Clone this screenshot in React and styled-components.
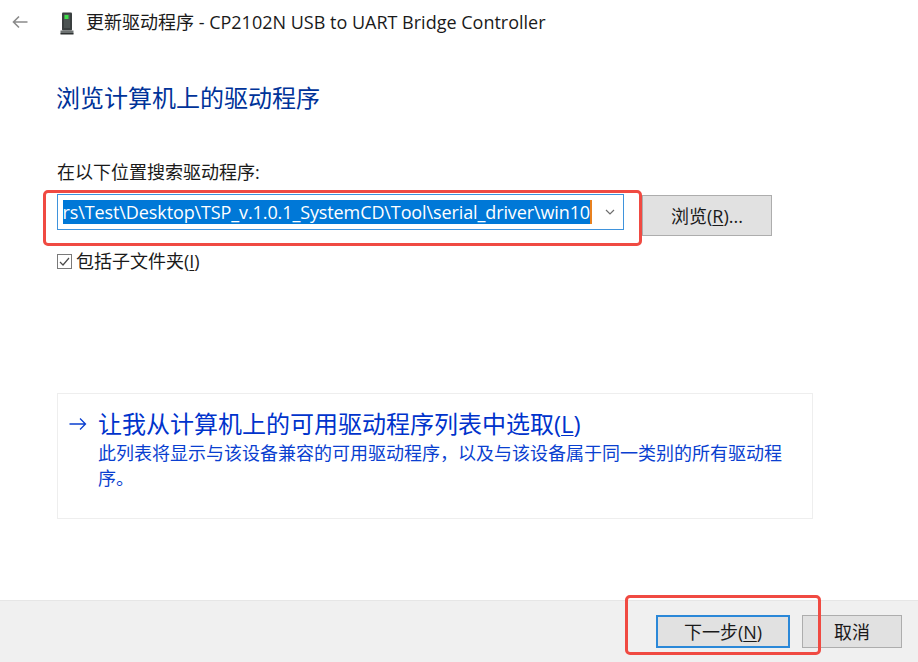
import React from "react";
import styled, { createGlobalStyle } from "styled-components";

const Global = createGlobalStyle`
  html, body { margin: 0; padding: 0; background: #fff; }
  body { font-family: "Open Sans", "Noto Sans CJK SC", sans-serif; }
  * { box-sizing: border-box; }
`;
const Page = styled.div`
  position: relative; width: 918px; height: 662px; display: flex; flex-direction: column;
  overflow: hidden; background: #fff; color: #1a1a1a;
`;
const Header = styled.header`
  height: 46px; display: flex; align-items: center; padding-left: 12px; flex: none;
`;
const Back = styled.svg`width: 16px; height: 14px; flex: none; margin-right: 32px; margin-top: -3px;`;
const Device = styled.svg`width: 14px; height: 23px; flex: none; margin-right: 12px;`;
const Title = styled.div`font-size: 18px; line-height: 24px; white-space: nowrap; margin-top: -2px;`;
const Main = styled.main`flex: 1; padding: 0 105px 0 57px; display: flex; flex-direction: column;`;
const Heading = styled.h1`
  margin: 34px 0 0 -1px; font-size: 24px; font-weight: 400; line-height: 36px; color: #003399; white-space: nowrap;
`;
const Label = styled.div`margin-top: 44px; font-size: 18px; line-height: 24px; white-space: nowrap;`;
const Row = styled.div`margin-top: 10px; display: flex; align-items: flex-start; gap: 18px;`;
const Combo = styled.div`
  width: 567px; height: 36px; border: 1px solid #3f93dc; display: flex; align-items: center; padding-left: 5px; background: #fff;
`;
const Field = styled.div`width: 529px; height: 24px; display: flex; justify-content: flex-end; margin-top: -1px;`;
const Selected = styled.span`
  flex: none; height: 24px; line-height: 24px; font-size: 18px; background: #0078d7; color: #fff; white-space: nowrap;
  border-right: 2px solid #e8811f; letter-spacing: -0.11px;
`;
const Chevron = styled.svg`width: 10px; height: 6px; margin-left: 13px; flex: none;`;
const Button = styled.button`
  width: ${p => p.$w}px; height: ${p => p.$h}px; background: #e1e1e1; font: inherit; font-size: 18px; color: #1a1a1a;
  border: 1px solid ${p => (p.$primary ? "#2b88d8" : "#adadad")}; border-width: ${p => (p.$primary ? 2 : 1)}px;
  padding: 0; display: flex; align-items: center; justify-content: center; white-space: nowrap; line-height: 24px;
  margin-top: ${p => p.$top || 0}px;
`;
const Key = styled.span`text-decoration: underline; text-underline-offset: 2px; text-decoration-thickness: 1px;`;
const CheckRow = styled.label`margin-top: 13px; display: flex; align-items: center; gap: 4px; font-size: 18px; line-height: 24px;`;
const Check = styled.svg`width: 15px; height: 15px; flex: none;`;
const LinkBox = styled.div`
  margin-top: 120px; width: 756px; height: 126px; border: 1px solid #eeeeee; display: flex; gap: 11px; padding: 15px 11px 0;
  color: #0033cc;
`;
const Arrow = styled.svg`width: 18px; height: 14px; flex: none; margin-top: 8px;`;
const LinkText = styled.div`display: flex; flex-direction: column; width: 690px;`;
const LinkTitle = styled.div`font-size: 24px; line-height: 30px; white-space: nowrap;`;
const LinkDesc = styled.div`font-size: 18px; line-height: 25px; margin-top: 2px; color: #0a3fd0;`;
const Footer = styled.footer`
  height: 62px; flex: none; background: #f0f0f0; border-top: 1px solid #e6e6e6; display: flex; align-items: flex-start;
  justify-content: flex-end; gap: 12px; padding: 14px 16px 0 0;
`;
const Callout = styled.div`
  position: absolute; left: ${p => p.$x}px; top: ${p => p.$y}px; width: ${p => p.$w}px; height: ${p => p.$h}px;
  border: 3px solid #f04a42; border-radius: 5px; pointer-events: none;
`;

export default function App() {
  return (
    <Page>
      <Global />
      <Header>
        <Back viewBox="0 0 16 14" fill="none" stroke="#8a8a8a" strokeWidth="1.6">
          <path d="M15.5 7H1.5M7 1.5 1.5 7 7 12.5" />
        </Back>
        <Device viewBox="0 0 14 23">
          <rect x="2" y="0.5" width="10" height="18" rx="1" fill="#3a3f3f" />
          <rect x="4" y="2" width="6" height="14" fill="#4c5352" />
          <rect x="4.5" y="3" width="4" height="4" fill="#3fe04a" />
          <rect x="0.5" y="18.5" width="13" height="3" fill="#6d7272" />
          <rect x="0.5" y="21" width="13" height="1.5" fill="#2e3232" />
        </Device>
        <Title>更新驱动程序 - CP2102N USB to UART Bridge Controller</Title>
      </Header>
      <Main>
        <Heading>浏览计算机上的驱动程序</Heading>
        <Label>在以下位置搜索驱动程序:</Label>
        <Row>
          <Combo>
            <Field>
              <Selected>rs\Test\Desktop\TSP_v.1.0.1_SystemCD\Tool\serial_driver\win10</Selected>
            </Field>
            <Chevron viewBox="0 0 10 6" fill="none" stroke="#6e6e6e" strokeWidth="1.2">
              <path d="M1 1l4 4 4-4" />
            </Chevron>
          </Combo>
          <Button $w={130} $h={41} $top={1}>浏览(<Key>R</Key>)...</Button>
        </Row>
        <CheckRow>
          <Check viewBox="0 0 15 15" fill="none">
            <rect x="0.5" y="0.5" width="14" height="14" stroke="#7a7a7a" />
            <path d="M3 8l3 3 6-7" stroke="#4a4a4a" strokeWidth="1.2" />
          </Check>
          <span>包括子文件夹(<Key>I</Key>)</span>
        </CheckRow>
        <LinkBox>
          <Arrow viewBox="0 0 18 14" fill="none" stroke="#0a3fd0" strokeWidth="1.3">
            <path d="M0.5 7h16M11 1.5 16.5 7 11 12.5" />
          </Arrow>
          <LinkText>
            <LinkTitle>让我从计算机上的可用驱动程序列表中选取(<Key>L</Key>)</LinkTitle>
            <LinkDesc>此列表将显示与该设备兼容的可用驱动程序，以及与该设备属于同一类别的所有驱动程序。</LinkDesc>
          </LinkText>
        </LinkBox>
      </Main>
      <Footer>
        <Button $w={134} $h={33} $primary>下一步(<Key>N</Key>)</Button>
        <Button $w={100} $h={33}>取消</Button>
      </Footer>
      <Callout $x={43} $y={190} $w={599} $h={56} />
      <Callout $x={625} $y={595} $w={196} $h={60} />
    </Page>
  );
}
